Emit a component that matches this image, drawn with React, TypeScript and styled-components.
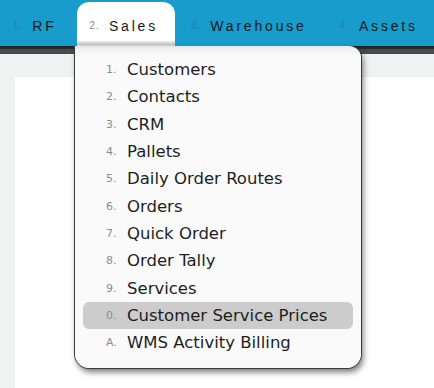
import React from 'react'
import styled, { createGlobalStyle } from 'styled-components'

const GlobalStyle = createGlobalStyle`
  html, body {
    margin: 0;
    padding: 0;
    background: #f0f1f1;
    font-family: 'DejaVu Sans', Verdana, sans-serif;
  }
`

const Page = styled.div`
  width: 434px;
  height: 388px;
  overflow: hidden;
  position: relative;
`

const TopBar = styled.div`
  height: 46px;
  background: #179ccb;
  display: flex;
  align-items: flex-end;
  gap: 3px;
`

const DarkStrip = styled.div`
  height: 8px;
  background: linear-gradient(#232425 0, #2a2b2c 3px, #4a4b4d 3px, #4a4b4d 8px);
`

const Tab = styled.div<{ $active?: boolean }>`
  position: relative;
  height: 44px;
  box-sizing: border-box;
  padding: 3px 17px 0 13px;
  display: flex;
  align-items: center;
  border-radius: 12px 12px 0 0;
  background: ${(p) =>
    p.$active
      ? 'linear-gradient(#ffffff 0, #ffffff 38px, #e4e4e4 40px, #c4c4c4 42px, #dedede 44px)'
      : 'transparent'};
  font-family: 'Liberation Sans', Arial, sans-serif;
`

const TabNum = styled.span<{ $active?: boolean }>`
  font-size: 10px;
  letter-spacing: 1px;
  margin-right: 9px;
  color: ${(p) => (p.$active ? '#8a8a8a' : '#2383ab')};
`

const TabLabel = styled.span`
  font-size: 14px;
  letter-spacing: 2.8px;
  color: #151a1d;
`

const Content = styled.div`
  padding: 23px 0 0 15px;
`

const Panel = styled.div`
  height: 320px;
  background: #ffffff;
`

const Dropdown = styled.div`
  position: absolute;
  top: 46px;
  left: 75px;
  width: 286px;
  height: 322px;
  box-sizing: border-box;
  padding: 10px 8px 0;
  background: linear-gradient(#e6e6e6 0px, #f3f3f3 4px, #fafafa 10px);
  border-radius: 0 12px 14px 14px;
  box-shadow: -1px 0 0 #3a3a3a, 1px 0 0 #3a3a3a, 0 1px 0 #3a3a3a,
    2px 4px 6px rgba(0, 0, 0, 0.55);
  z-index: 2;
`

const Item = styled.div<{ $selected?: boolean }>`
  display: flex;
  align-items: center;
  height: 27.3px;
  border-radius: 6px;
  background: ${(p) => (p.$selected ? '#cccccc' : 'transparent')};
`

const ItemNum = styled.span`
  width: 44px;
  padding-left: 23px;
  box-sizing: border-box;
  font-size: 11px;
  color: #8c8c8c;
`

const ItemLabel = styled.span`
  font-size: 16.5px;
  color: #1e1e1e;
`

const tabs = [
  { n: '1.', label: 'RF' },
  { n: '2.', label: 'Sales', active: true },
  { n: '3.', label: 'Warehouse' },
  { n: '4.', label: 'Assets' },
]

const items = [
  ['1.', 'Customers'],
  ['2.', 'Contacts'],
  ['3.', 'CRM'],
  ['4.', 'Pallets'],
  ['5.', 'Daily Order Routes'],
  ['6.', 'Orders'],
  ['7.', 'Quick Order'],
  ['8.', 'Order Tally'],
  ['9.', 'Services'],
  ['0.', 'Customer Service Prices'],
  ['A.', 'WMS Activity Billing'],
]

const App = () => {
  return (
    <Page>
      <GlobalStyle />
      <TopBar>
        {tabs.map((t) => (
          <Tab key={t.label} $active={t.active}>
            <TabNum $active={t.active}>{t.n}</TabNum>
            <TabLabel>{t.label}</TabLabel>
          </Tab>
        ))}
      </TopBar>
      <DarkStrip />
      <Content>
        <Panel />
      </Content>
      <Dropdown>
        {items.map(([n, label]) => (
          <Item key={n} $selected={n === '0.'}>
            <ItemNum>{n}</ItemNum>
            <ItemLabel>{label}</ItemLabel>
          </Item>
        ))}
      </Dropdown>
    </Page>
  )
}

export default App
